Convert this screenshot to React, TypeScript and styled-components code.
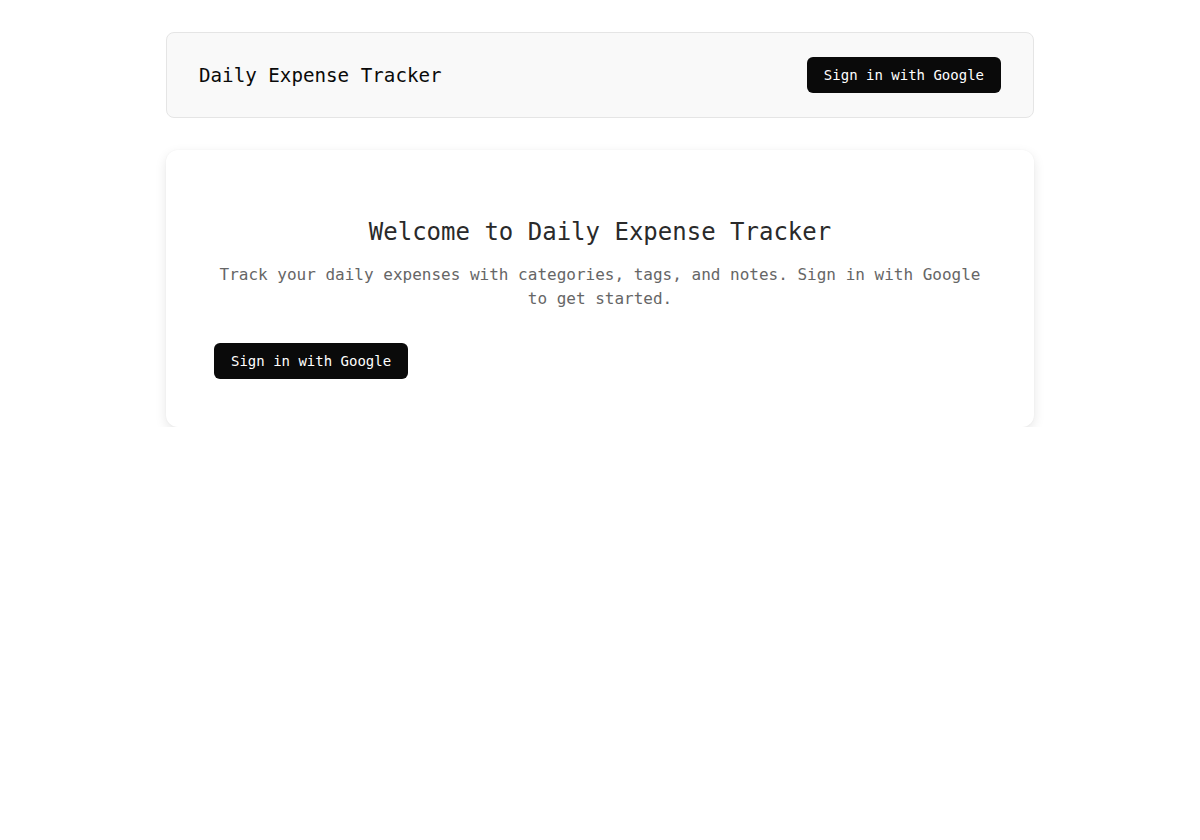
import React from "react";
import styled, { createGlobalStyle } from "styled-components";

const Global = createGlobalStyle`
  html, body { margin: 0; padding: 0; background: #ffffff; }
  body { font-family: "DejaVu Sans Mono", "Liberation Mono", monospace; }
  * { box-sizing: border-box; }
`;

const Page = styled.div`
  max-width: 868px;
  margin: 0 auto;
  padding-top: 32px;
  display: flex;
  flex-direction: column;
  gap: 32px;
`;

const Header = styled.header`
  display: flex;
  align-items: center;
  justify-content: space-between;
  background: #f9f9f9;
  border: 1px solid #e5e5e5;
  border-radius: 8px;
  padding: 24px 32px;
`;

const Title = styled.h1`
  margin: 0;
  font-size: 19.2px;
  font-weight: 500;
  color: #0a0a0a;
`;

const Button = styled.button`
  font-family: inherit;
  font-size: 14px;
  height: 36px;
  padding: 0 17px;
  background: #0a0a0a;
  color: #ffffff;
  border: none;
  border-radius: 6px;
  cursor: pointer;
  white-space: nowrap;
`;

const Card = styled.section`
  background: #ffffff;
  border-radius: 12px;
  padding: 48px;
  box-shadow: 0 4px 12px rgba(0, 0, 0, 0.1), 0 0 2px rgba(0, 0, 0, 0.04);
  display: flex;
  flex-direction: column;
  align-items: flex-start;
`;

const Intro = styled.div`
  width: 100%;
  text-align: center;
  padding-top: 20px;
`;

const Heading = styled.h2`
  margin: 0;
  font-size: 24px;
  line-height: 29px;
  font-weight: 400;
  color: #2a2a2a;
`;

const Lead = styled.p`
  margin: 16px 0 0;
  font-size: 16px;
  line-height: 24px;
  color: #666666;
`;

const CardButton = styled(Button)`
  margin-top: 32px;
`;

export default function App() {
  return (
    <>
      <Global />
      <Page>
        <Header>
          <Title>Daily Expense Tracker</Title>
          <Button>Sign in with Google</Button>
        </Header>
        <Card>
          <Intro>
            <Heading>Welcome to Daily Expense Tracker</Heading>
            <Lead>
              Track your daily expenses with categories, tags, and notes. Sign in with Google to get started.
            </Lead>
          </Intro>
          <CardButton>Sign in with Google</CardButton>
        </Card>
      </Page>
    </>
  );
}
